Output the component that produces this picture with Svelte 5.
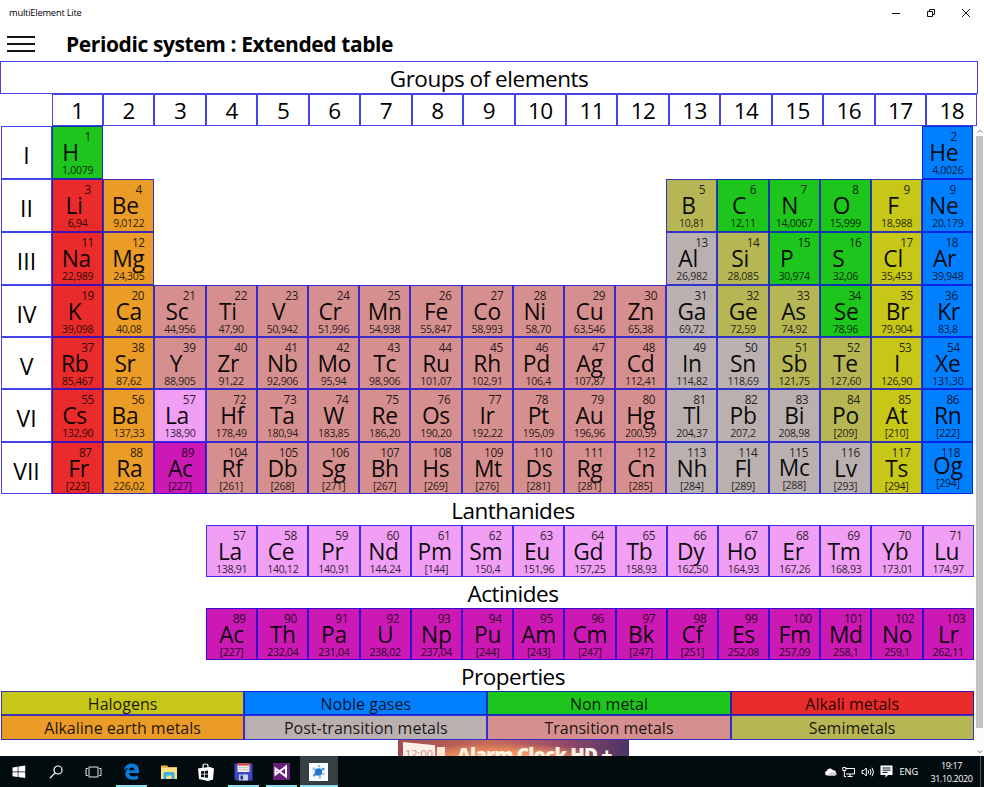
<script lang="ts">
  // number, symbol, mass, category, column, symbol shift, number shift, optional vertical lift
  type Element = [number, string, string, string, number, number, number, number?];

  const periods: { label: string; elements: Element[] }[] = [
    {
      label: "I",
      elements: [
        [1, "H", "1,0079", "nonmetal", 1, -7, 10],
        [2, "He", "4,0026", "noble", 18, -4, 6],
      ],
    },
    {
      label: "II",
      elements: [
        [3, "Li", "6,94", "alkali", 1, -3.5, 10],
        [4, "Be", "9,0122", "alkaline", 2, -3.5, 10],
        [5, "B", "10,81", "semimetal", 13, -3.5, 10],
        [6, "C", "12,11", "nonmetal", 14, -4, 10],
        [7, "N", "14,0067", "nonmetal", 15, -4.5, 9.5],
        [8, "O", "15,999", "nonmetal", 16, -4, 10],
        [9, "F", "18,988", "halogen", 17, -3.5, 10],
        [9, "Ne", "20,179", "noble", 18, -4, 5],
      ],
    },
    {
      label: "III",
      elements: [
        [11, "Na", "22,989", "alkali", 1, -1.3, 10],
        [12, "Mg", "24,305", "alkaline", 2, -0.5, 9.5],
        [13, "Al", "26,982", "post", 13, -3.7, 9.7],
        [14, "Si", "28,085", "semimetal", 14, -3, 10],
        [15, "P", "30,974", "nonmetal", 15, -7.4, 9.6],
        [16, "S", "32,06", "nonmetal", 16, -7, 9.7],
        [17, "Cl", "35,453", "halogen", 17, -3.5, 10],
        [18, "Ar", "39,948", "noble", 18, -3.3, 4],
      ],
    },
    {
      label: "IV",
      elements: [
        [19, "K", "39,098", "alkali", 1, -3, 10],
        [20, "Ca", "40,08", "alkaline", 2, 0, 9],
        [21, "Sc", "44,956", "transition", 3, -3, 9.3],
        [22, "Ti", "47,90", "transition", 4, -3.2, 9.5],
        [23, "V", "50,942", "transition", 5, -3.7, 9.3],
        [24, "Cr", "51,996", "transition", 6, -3.6, 9.7],
        [25, "Mn", "54,938", "transition", 7, 0, 9],
        [26, "Fe", "55,847", "transition", 8, 0, 9.3],
        [27, "Co", "58,993", "transition", 9, 0, 9.8],
        [28, "Ni", "58,70", "transition", 10, -3.7, 1.6],
        [29, "Cu", "63,546", "transition", 11, 0, 9.4],
        [30, "Zn", "65,38", "transition", 12, 0, 10],
        [31, "Ga", "69,72", "post", 13, 0, 9],
        [32, "Ge", "72,59", "semimetal", 14, 0, 9.8],
        [33, "As", "74,92", "semimetal", 15, -0.7, 9],
        [34, "Se", "78,96", "nonmetal", 16, 0.7, 9.4],
        [35, "Br", "79,904", "halogen", 17, 1, 10],
        [36, "Kr", "83,8", "noble", 18, 0.7, 3.7],
      ],
    },
    {
      label: "V",
      elements: [
        [37, "Rb", "85,467", "alkali", 1, -3, 10],
        [38, "Sr", "87,62", "alkaline", 2, -3.8, 9.2],
        [39, "Y", "88,905", "transition", 3, -4, 9.3],
        [40, "Zr", "91,22", "transition", 4, -3, 9.5],
        [41, "Nb", "92,906", "transition", 5, 0, 9],
        [42, "Mo", "95,94", "transition", 6, 0.7, 9.4],
        [43, "Tc", "98,906", "transition", 7, 0, 9],
        [44, "Ru", "101,07", "transition", 8, 0, 9.3],
        [45, "Rh", "102,91", "transition", 9, 0, 9.4],
        [46, "Pd", "106,4", "transition", 10, -2, 3.6],
        [47, "Ag", "107,87", "transition", 11, 0, 9],
        [48, "Cd", "112,41", "transition", 12, 0, 8.2],
        [49, "In", "114,82", "post", 13, 0, 7.7],
        [50, "Sn", "118,69", "post", 14, 0, 8],
        [51, "Sb", "121,75", "semimetal", 15, 0, 7.3],
        [52, "Te", "127,60", "semimetal", 16, 0, 8],
        [53, "I", "126,90", "halogen", 17, 0.5, 8.5],
        [54, "Xe", "131,30", "noble", 18, 0, 5.7],
      ],
    },
    {
      label: "VI",
      elements: [
        [55, "Cs", "132,90", "alkali", 1, -3, 10],
        [56, "Ba", "137,33", "alkaline", 2, -3.8, 9.2],
        [57, "La", "138,90", "lanthanide", 3, -3, 9.3],
        [72, "Hf", "178,49", "transition", 4, 1, 8.5],
        [73, "Ta", "180,94", "transition", 5, 0, 7.6],
        [74, "W", "183,85", "transition", 6, 0, 8.4],
        [75, "Re", "186,20", "transition", 7, 0, 7.5],
        [76, "Os", "190,20", "transition", 8, 0, 8],
        [77, "Ir", "192,22", "transition", 9, 0, 7.8],
        [78, "Pt", "195,09", "transition", 10, 0, 3.6],
        [79, "Au", "196,96", "transition", 11, 0, 8],
        [80, "Hg", "200,59", "transition", 12, 0, 8.2],
        [81, "Tl", "204,37", "post", 13, 0, 7.7],
        [82, "Pb", "207,2", "post", 14, 0, 8],
        [83, "Bi", "208,98", "post", 15, 0, 7.6],
        [84, "Po", "[209]", "semimetal", 16, 0, 8],
        [85, "At", "[210]", "halogen", 17, 0, 8],
        [86, "Rn", "[222]", "noble", 18, 0, 5],
      ],
    },
    {
      label: "VII",
      elements: [
        [87, "Fr", "[223]", "alkali", 1, 1, 7.7],
        [88, "Ra", "226,02", "alkaline", 2, 0.5, 7.5],
        [89, "Ac", "[227]", "actinide", 3, 0.3, 7.7],
        [104, "Rf", "[261]", "transition", 4, 1, 6.5],
        [105, "Db", "[268]", "transition", 5, 0, 6],
        [106, "Sg", "[271]", "transition", 6, 0, 6],
        [107, "Bh", "[267]", "transition", 7, 0, 5.2],
        [108, "Hs", "[269]", "transition", 8, 0, 6],
        [109, "Mt", "[276]", "transition", 9, 0.8, 6.5],
        [110, "Ds", "[281]", "transition", 10, 0.6, 4.3],
        [111, "Rg", "[281]", "transition", 11, 0, 4.4],
        [112, "Cn", "[285]", "transition", 12, 0.5, 5],
        [113, "Nh", "[284]", "post", 13, 0, 4.7],
        [114, "Fl", "[289]", "post", 14, 0, 4.8],
        [115, "Mc", "[288]", "post", 15, 0, 4.3, 1],
        [116, "Lv", "[293]", "post", 16, 0, 5],
        [117, "Ts", "[294]", "halogen", 17, 0, 4.5],
        [118, "Og", "[294]", "noble", 18, 0, 2.7, 3.5],
      ],
    },
  ];

  const series = (names: string, masses: string, first: number, category: string, shift: number): Element[] => {
    const list = masses.split(" ");
    return names.split(" ").map((name, i) => [first + i, name, list[i], category, i + 1, shift, 7.7]);
  };

  const lanthanides = series(
    "La Ce Pr Nd Pm Sm Eu Gd Tb Dy Ho Er Tm Yb Lu",
    "138,91 140,12 140,91 144,24 [144] 150,4 151,96 157,25 158,93 162,50 164,93 167,26 168,93 173,01 174,97",
    57, "lanthanide", -1.7,
  );
  const actinides = series(
    "Ac Th Pa U Np Pu Am Cm Bk Cf Es Fm Md No Lr",
    "[227] 232,04 231,04 238,02 237,04 [244] [243] [247] [247] [251] 252,08 257,09 258,1 259,1 262,11",
    89, "actinide", 0,
  );

  const legend = [
    ["Halogens", "halogen"],
    ["Noble gases", "noble"],
    ["Non metal", "nonmetal"],
    ["Alkali metals", "alkali"],
    ["Alkaline earth metals", "alkaline"],
    ["Post-transition metals", "post"],
    ["Transition metals", "transition"],
    ["Semimetals", "semimetal"],
  ];

  const groups = Array.from({ length: 18 }, (_, i) => i + 1);
</script>

{#snippet cell(el: Element, row: number, offset: number)}
  <div class="cell {el[3]}" style:grid-row={row} style:grid-column={el[4] + offset}>
    <span class="number" style:margin-left="{el[6] * 2}px">{el[0]}</span>
    <span class="symbol" style:margin-left="{el[5] * 2}px" style:margin-top="{-(el[7] ?? 0)}px">{el[1]}</span>
    <span class="mass">{el[2]}</span>
  </div>
{/snippet}

<div class="window">
  <header class="titlebar">
    <span class="app-name">multiElement Lite</span>
    <div class="controls">
      <svg width="10" height="10" viewBox="0 0 10 10"><path d="M1 5.5h8" /></svg>
      <svg width="10" height="10" viewBox="0 0 10 10"><path d="M1.5 3.5h5v5h-5zM3.5 3.5v-2h5v5h-2" /></svg>
      <svg width="10" height="10" viewBox="0 0 10 10"><path d="M1 1l8 8M9 1l-8 8" /></svg>
    </div>
  </header>

  <div class="heading">
    <button class="menu" aria-label="Menu"><i></i><i></i><i></i></button>
    <h1>Periodic system : Extended table</h1>
  </div>

  <div class="groups-title">Groups of elements</div>
  <div class="groups">
    {#each groups as group}
      <div>{group}</div>
    {/each}
  </div>

  <div class="body">
    <div class="content">
      <div class="table">
        {#each periods as period, i}
          <div class="period" style:grid-row={i + 1}>{period.label}</div>
          {#each period.elements as el}
            {@render cell(el, i + 1, 1)}
          {/each}
        {/each}
      </div>

      <h2>Lanthanides</h2>
      <div class="series">
        {#each lanthanides as el}
          {@render cell(el, 1, 0)}
        {/each}
      </div>

      <h2>Actinides</h2>
      <div class="series">
        {#each actinides as el}
          {@render cell(el, 1, 0)}
        {/each}
      </div>

      <h2>Properties</h2>
      <div class="legend">
        {#each legend as [label, category]}
          <div class={category}>{label}</div>
        {/each}
      </div>

      <div class="ad">
        <div class="ad-clock"><span>12:00</span></div>
        <i class="ad-flag"></i>
        <span class="ad-name">Alarm Clock HD +</span>
      </div>
    </div>

    <div class="scrollbar">
      <svg width="6" height="10" viewBox="0 0 6 10"><path d="M.8 6.5 3 4.3l2.2 2.2" /></svg>
      <div class="thumb"></div>
      <svg class="down" width="6" height="8" viewBox="0 0 6 8"><path d="M.8 2.5 3 4.7l2.2-2.2" /></svg>
    </div>
  </div>

  <footer class="taskbar">
    <div class="task">
      <svg width="14" height="14" viewBox="0 0 14 14"><path fill="#fff" d="M.5 2.4 5.7 1.7v4.8H.5zM6.4 1.6 13.2.6v5.9H6.4zM.5 7.2h5.2V12L.5 11.3zM6.4 7.2h6.8v5.9l-6.8-1z" /></svg>
    </div>
    <div class="task">
      <svg width="14" height="14" viewBox="0 0 14 14" fill="none" stroke="#fff" stroke-width="1.2"><circle cx="9" cy="5" r="4" /><path d="M6.2 7.9 1 13" /></svg>
    </div>
    <div class="task">
      <svg width="17" height="12" viewBox="0 0 17 12" fill="none" stroke="#e8e8e8"><path d="M4 1h9v10H4zM2.8 2.5H1v7h1.8M14.2 2.5H16v7h-1.8" /></svg>
    </div>
    <div class="task open">
      <svg width="17" height="17" viewBox="0 0 17 17"><path fill="#0a7ddb" d="M1 7.6C1.6 3 4.8.6 8.7.6c4.6 0 7.3 3.1 7.3 7.5v1.9H5.9c.2 2.4 2.2 3.5 4.7 3.5 1.7 0 3.1-.4 4.4-1.1v3.4c-1.5.7-3.1 1-5.1 1C5.3 16.8 2.3 14.3 2.3 10.6c0-2.500 1.300-4.500 3.500-5.700C3.600 5 2 6 1 7.600zM5.900 7.200h5.700c0-1.800-.9-2.800-2.600-2.800-1.600 0-2.800 1-3.100 2.800z" /></svg>
    </div>
    <div class="task">
      <svg width="18" height="16" viewBox="0 0 18 16"><path fill="#e9b93f" d="M1 1.5h6L8.500 3H17v12H1z" /><path fill="#fbdf83" d="M1 4h16v11H1z" /><path fill="#3aafe0" d="M3.500 15V9.500Q3.500 8 5 8h8q1.500 0 1.500 1.500V15h-3v-3.500h-5V15z" /></svg>
    </div>
    <div class="task">
      <svg width="18" height="18" viewBox="0 0 18 18"><path fill="#fff" d="M1 5.5 4 5l9-1 4 1.500-1 11L11 18 2 16z" /><path fill="none" stroke="#fff" stroke-width="1.2" d="M6 5.500V3q0-2 2.500-2T11 3v2" /><path fill="#020b0d" d="m4 8.300 3-.3v2.800H4zM7.700 7.900 11 7.600v3.200H7.700zM4 11.500h3v2.800l-3-.3zM7.700 11.500H11v3.200l-3.300-.3z" /></svg>
    </div>
    <div class="task open">
      <svg width="19" height="18" viewBox="0 0 19 18"><path fill="#3d49c8" d="M.5.500h18v17H2L.5 16z" /><path fill="#f4e9e4" d="M3.500.500h12V9h-12z" /><path fill="#e0392e" d="M3.500.500h12v2h-12z" /><path stroke="#b9b9c2" stroke-width=".7" d="M4.500 4.500h10M4.500 6.500h10" /><path fill="#cdcfe4" d="M5 11.500h9v6H5z" /><path fill="#28318e" d="M6.500 12.500H9v4H6.500z" /></svg>
    </div>
    <div class="task open">
      <svg width="17" height="17" viewBox="0 0 17 17"><path fill="#68217a" d="M0 0h17v17H0z" /><path fill="none" stroke="#fff" stroke-width="2" d="M13 3.500v10L2.500 5.500v6z" /></svg>
    </div>
    <div class="task open active">
      <svg width="19" height="18" viewBox="0 0 19 18"><path fill="#fbfdff" d="M0 0h19v18H0z" /><g fill="#8cc6f0"><circle cx="9.5" cy="9" r="3.8" fill="#2776c9" /><circle cx="5" cy="6" r="1.5" /><circle cx="10" cy="3.3" r="1.3" /><circle cx="14" cy="6" r="1.5" fill="#3f93dc" /><circle cx="5.5" cy="12" r="1.5" fill="#3f93dc" /><circle cx="11" cy="14.3" r="1.4" /><circle cx="14.5" cy="11" r="1.2" /></g></svg>
    </div>

    <div class="tray">
      <svg width="13" height="10" viewBox="0 0 13 10"><path fill="#fff" d="M3 8.500a2.300 2.300 0 0 1-.3-4.500A3.500 3.500 0 0 1 9 3.200a2.700 2.700 0 0 1 1 5.300z" /><path fill="#d3d7d8" d="M4 8.500q0-2.800 2.800-2.800.8-1.700 2.700-1.200Q12.500 5 12.700 7q0 1.500-1.700 1.500z" /></svg>
      <svg width="13" height="12" viewBox="0 0 13 12" fill="none" stroke="#fff"><path d="M4 2.500h8.500V8H4M8 8v2.500M5.500 10.500h5M.8 1.500h3v3h-3zM2.300 4.500v6H4" /></svg>
      <svg width="14" height="12" viewBox="0 0 14 12" fill="none" stroke="#fff"><path d="M1 4.500h1.800l2.500-2.500v8L2.800 7.500H1zM7 4.300q1.200 1.700 0 3.400M9 3q2 3 0 6M11 1.700q3 4.300 0 8.600" /></svg>
      <svg width="13" height="13" viewBox="0 0 13 13"><path fill="#fff" d="M.5.500h12v9.500H8L5.500 12.700V10h-5z" /><path stroke="#020b0d" d="M2.500 3h8M2.500 5.200h8M2.500 7.400h5" /></svg>
      <span class="lang">ENG</span>
      <div class="clock"><span>19:17</span><span>31.10.2020</span></div>
      <i class="desktop-edge"></i>
    </div>
  </footer>
</div>

<style>
  :global(body) {
    background: #ffffff;
  }

  .window {
    display: flex;
    flex-direction: column;
    width: 984px;
    height: 787px;
    overflow: hidden;
    background: #ffffff;
    color: #000000;
    font-family: "Open Sans", "Noto Sans", sans-serif;
    --line: rgba(8, 8, 222, 0.76);
  }

  .window :global(*) {
    box-sizing: border-box;
  }

  .titlebar {
    display: flex;
    align-items: center;
    justify-content: space-between;
    height: 25px;
    padding: 0 13px 0 9px;
    flex: none;
  }

  .app-name {
    font-size: 9.3px;
    line-height: 14px;
    letter-spacing: -0.2px;
  }

  .controls {
    display: flex;
    gap: 25px;
  }

  .controls svg {
    fill: none;
    stroke: #111111;
    stroke-width: 1;
  }

  .heading {
    display: flex;
    align-items: center;
    height: 36px;
    padding: 2px 0 0 7px;
    flex: none;
  }

  .menu {
    display: flex;
    flex-direction: column;
    gap: 5px;
    width: 28px;
    margin: 0 31px 1px 0;
    padding: 0;
    background: none;
    border: 0;
  }

  .menu i {
    height: 2px;
    background: #151515;
  }

  h1 {
    margin: 0;
    font-size: 21px;
    font-weight: 700;
    line-height: 30px;
    letter-spacing: -0.4px;
    white-space: nowrap;
  }

  .groups-title {
    width: 978px;
    height: 33px;
    border: 1px solid var(--line);
    font-size: 22.5px;
    line-height: 34px;
    letter-spacing: -0.48px;
    text-align: center;
    flex: none;
  }

  .groups {
    display: grid;
    grid-template-columns: repeat(18, 51.45px);
    grid-template-rows: 32px;
    height: 32px;
    padding-left: 51.6px;
    flex: none;
  }

  .groups div {
    border: 1px solid var(--line);
    font-size: 22.5px;
    line-height: 32px;
    letter-spacing: -0.6px;
    text-align: center;
  }

  .body {
    display: flex;
    height: 630px;
    flex: none;
  }

  .content {
    display: flex;
    flex-direction: column;
    width: 975px;
    padding-left: 1px;
    overflow: hidden;
  }

  .table {
    display: grid;
    grid-template-columns: 51px repeat(18, 51.2px);
    grid-template-rows: 53px 53px 53px 52px 52px 53px 52px;
  }

  .period {
    display: flex;
    align-items: center;
    justify-content: center;
    grid-column: 1;
    padding-top: 5px;
    border: 1px solid var(--line);
    font-size: 23px;
    line-height: 30px;
  }

  .cell {
    display: flex;
    flex-direction: column;
    min-width: 0;
    border: 1px solid var(--line);
    text-align: center;
    white-space: nowrap;
  }

  .number {
    height: 12px;
    margin-top: 3px;
    color: rgba(0, 0, 0, 0.84);
    font-size: 11.8px;
    line-height: 12px;
    letter-spacing: -0.35px;
  }

  .symbol {
    height: 21px;
    color: rgba(0, 0, 0, 0.94);
    font-size: 22.8px;
    line-height: 21px;
    letter-spacing: -0.3px;
  }

  .mass {
    margin-top: 2px;
    color: rgba(0, 0, 0, 0.84);
    font-size: 10.6px;
    line-height: 11px;
    letter-spacing: -0.3px;
  }

  .series {
    display: grid;
    grid-template-columns: repeat(15, 51.2px);
    grid-template-rows: 52px;
    padding-left: 205px;
    flex: none;
  }

  h2 {
    height: 31px;
    margin: 0;
    padding-left: 50px;
    font-size: 22.5px;
    font-weight: 400;
    line-height: 33px;
    letter-spacing: -0.5px;
    text-align: center;
    flex: none;
  }

  .legend {
    display: grid;
    grid-template-columns: repeat(4, 243.2px);
    grid-template-rows: 24px 25px;
    flex: none;
  }

  .legend div {
    border: 1px solid var(--line);
    color: rgba(0, 0, 0, 0.88);
    font-size: 16px;
    line-height: 25px;
    text-align: center;
  }

  .halogen { background: #c7c717; }
  .noble { background: #0080ff; }
  .nonmetal { background: #1dc51d; }
  .alkali { background: #e92b2b; }
  .alkaline { background: #ea9c26; }
  .post { background: #bab0b0; }
  .transition { background: #d58f8e; }
  .semimetal { background: #b6b655; }
  .lanthanide { background: #f09ff5; }
  .actinide { background: #cc18b5; }

  .ad {
    display: flex;
    align-items: flex-start;
    width: 231px;
    height: 16px;
    margin-left: 397px;
    overflow: hidden;
    background:
      radial-gradient(ellipse at 45% 120%, #ffc07a 0, #ee8b5d 30%, transparent 60%),
      linear-gradient(90deg, #a04c50, #c46a5a 40%, #9a4a68 70%, #4a3466);
    flex: none;
  }

  .ad-clock {
    width: 32px;
    height: 16px;
    margin: 2px 0 0 5px;
    background: #fbefe8;
    clip-path: polygon(0 0, 100% 20%, 100% 100%, 0 100%);
    color: #c98f80;
    font-size: 11px;
    line-height: 24px;
    text-align: center;
  }

  .ad-flag {
    width: 8px;
    height: 10px;
    margin: 7px 0 0 2px;
    background: #fbe5d8;
  }

  .ad-name {
    margin-left: 12px;
    color: #fff3e4;
    font-size: 19px;
    font-weight: 800;
    line-height: 30px;
    letter-spacing: -0.8px;
    white-space: nowrap;
  }

  .scrollbar {
    display: flex;
    flex-direction: column;
    align-items: center;
    width: 9px;
    background: #fcfcfc;
  }

  .scrollbar svg {
    fill: none;
    stroke: #777777;
    flex: none;
  }

  .thumb {
    width: 7px;
    height: 592px;
    background: #c2c2c2;
  }

  .scrollbar .down {
    margin-top: auto;
  }

  .taskbar {
    display: flex;
    height: 31px;
    background: #020b0d;
    color: #ffffff;
    flex: none;
  }

  .task {
    display: flex;
    align-items: center;
    justify-content: center;
    width: 37.5px;
    height: 31px;
    flex: none;
  }

  .task.open {
    background: linear-gradient(#8be0ee, #8be0ee) bottom / 31px 2px no-repeat;
  }

  .task.active {
    background:
      linear-gradient(#8be0ee, #8be0ee) bottom / 100% 2px no-repeat,
      #364042;
  }

  .tray {
    display: flex;
    align-items: center;
    margin-left: auto;
    gap: 5.5px;
  }

  .lang {
    margin-left: 1px;
    font-size: 9.2px;
    letter-spacing: -0.1px;
  }

  .clock {
    display: flex;
    flex-direction: column;
    align-items: center;
    width: 46px;
    margin-left: 5px;
    font-size: 9px;
    line-height: 13px;
    letter-spacing: -0.4px;
  }

  .desktop-edge {
    width: 4px;
    height: 31px;
    border-left: 1px solid #4a5355;
  }
</style>
